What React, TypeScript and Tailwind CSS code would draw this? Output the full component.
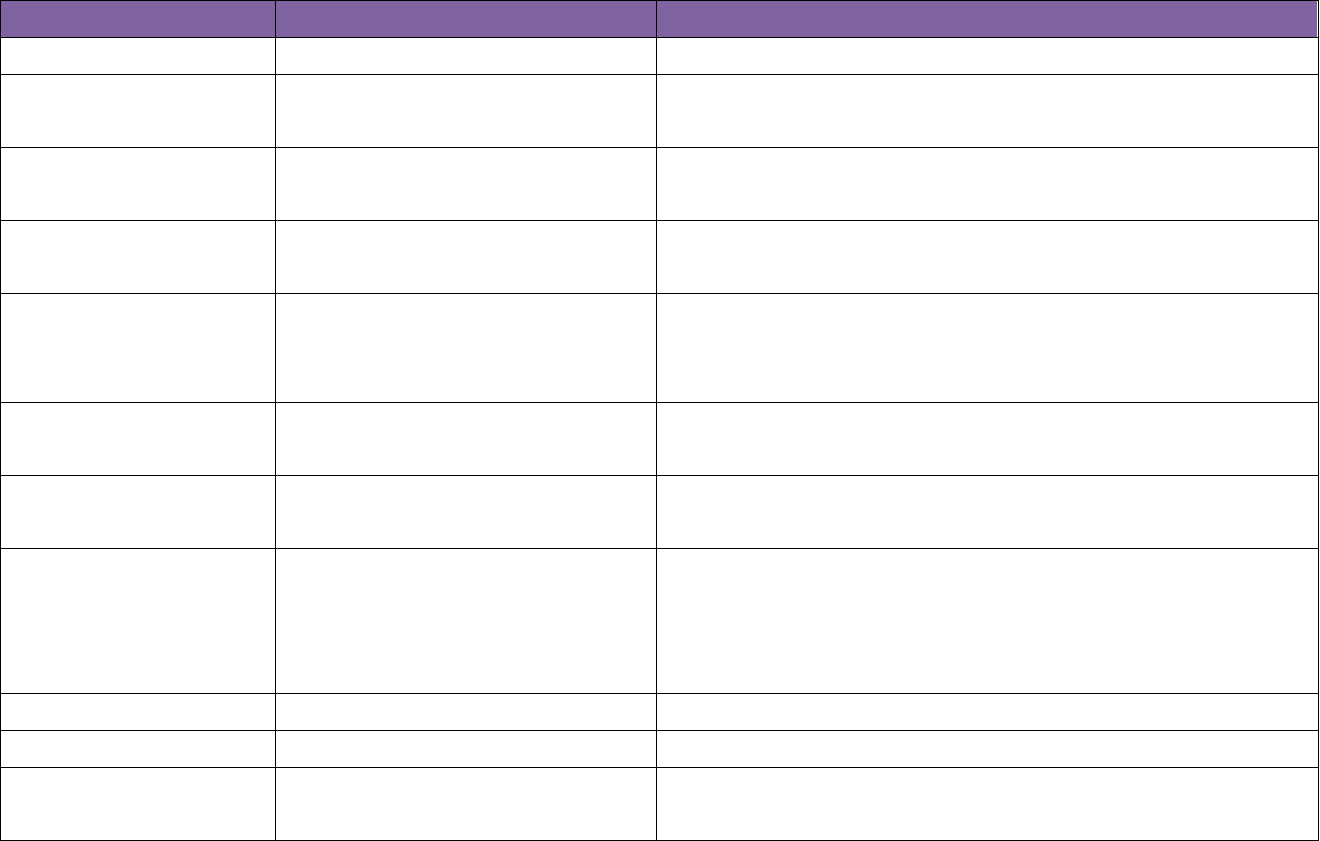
const rowHeights = [
  "h-[37px]",
  "h-[73px]",
  "h-[73px]",
  "h-[73px]",
  "h-[109px]",
  "h-[73px]",
  "h-[73px]",
  "h-[145px]",
  "h-[37px]",
  "h-[37px]",
  "h-[73px]",
];

function Row({ height }: { height: string }) {
  return (
    <div className={`flex ${height}`}>
      <div className="w-[275px] border-r border-b border-black" />
      <div className="w-[381px] border-r border-b border-black" />
      <div className="w-[662px] border-r border-b border-black" />
    </div>
  );
}

export default function App() {
  return (
    <div className="min-h-screen bg-white">
      <div className="w-[1319px] border-l border-t border-black font-['Liberation_Sans',sans-serif]">
        <div className="flex h-[37px]">
          <div className="w-[275px] border-r border-b border-black bg-[#8064a2]" />
          <div className="w-[381px] border-r border-b border-black bg-[#8064a2]" />
          <div className="w-[662px] border-r border-b border-black bg-white pr-px">
            <div className="h-full bg-[#8064a2]" />
          </div>
        </div>
        {rowHeights.map((h, i) => (
          <Row key={i} height={h} />
        ))}
      </div>
    </div>
  );
}
